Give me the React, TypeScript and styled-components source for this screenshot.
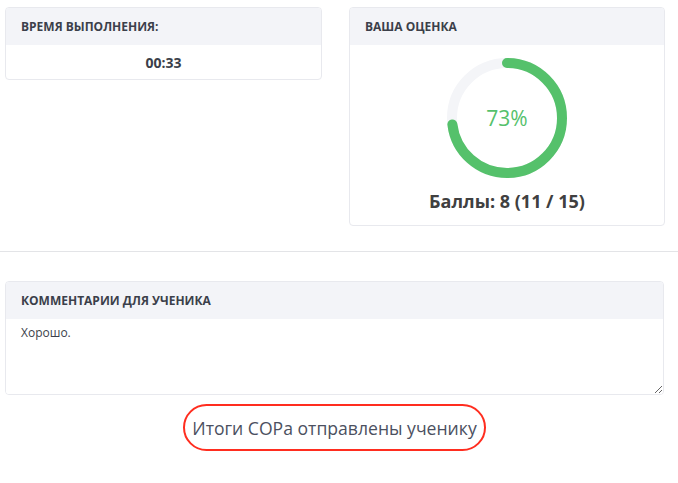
import styled, { createGlobalStyle } from "styled-components";

const GlobalStyle = createGlobalStyle`
  html, body {
    margin: 0;
    padding: 0;
    background: #fff;
  }
  body {
    font-family: "Open Sans", "Liberation Sans", sans-serif;
    color: #3b3f4a;
  }
  * { box-sizing: border-box; }
`;

const percent = 73;
const radius = 55;
const circumference = 2 * Math.PI * radius;

export default function App() {
  return <Page>
    <GlobalStyle />
    <TopRow>
      <Card>
        <CardHeader>Время выполнения:</CardHeader>
        <TimeBody>00:33</TimeBody>
      </Card>
      <Card>
        <CardHeader>Ваша оценка</CardHeader>
        <ScoreBody>
          <Gauge percent={percent} />
          <Points>Баллы: 8 (11 / 15)</Points>
        </ScoreBody>
      </Card>
    </TopRow>
    <Divider />
    <CommentSection>
      <Card>
        <CardHeader>Комментарии для ученика</CardHeader>
        <CommentArea readOnly defaultValue="Хорошо." />
      </Card>
      <StatusRow>
        <StatusOval>Итоги СОРа отправлены ученику</StatusOval>
      </StatusRow>
    </CommentSection>
  </Page>;
}

function Gauge(props: {percent: number}) {
  const filled = circumference * props.percent / 100;
  return <GaugeWrap>
    <svg width="120" height="120" viewBox="0 0 120 120">
      <circle cx="60" cy="60" r={radius} fill="none" stroke="#f4f5f8" strokeWidth="10" />
      <circle
        cx="60" cy="60" r={radius}
        fill="none"
        stroke="#55c16b"
        strokeWidth="10"
        strokeLinecap="round"
        strokeDasharray={`${filled} ${circumference}`}
        transform="rotate(-90 60 60)"
      />
    </svg>
    <GaugeLabel>{props.percent}%</GaugeLabel>
  </GaugeWrap>;
}

const Page = styled.div`
  width: 678px;
  padding-top: 7px;
`;

const TopRow = styled.div`
  display: grid;
  grid-template-columns: 317px 316px;
  column-gap: 27px;
  align-items: start;
  padding-left: 5px;
`;

const Card = styled.div`
  border: 1px solid #e8e9ee;
  border-radius: 4px;
  background: #fff;
  overflow: hidden;
`;

const CardHeader = styled.div`
  height: 37px;
  display: flex;
  align-items: center;
  padding: 0 15px;
  background: #f3f4f8;
  font-size: 12px;
  font-weight: 700;
  text-transform: uppercase;
  color: #3b3f4a;
`;

const TimeBody = styled.div`
  height: 34px;
  display: flex;
  align-items: center;
  justify-content: center;
  font-size: 14px;
  font-weight: 700;
  color: #3b3f4a;
`;

const ScoreBody = styled.div`
  display: flex;
  flex-direction: column;
  align-items: center;
  padding: 13px 0 11px;
`;

const GaugeWrap = styled.div`
  position: relative;
  width: 120px;
  height: 120px;
  svg { display: block; }
`;

const GaugeLabel = styled.div`
  position: absolute;
  inset: 0;
  display: flex;
  align-items: center;
  justify-content: center;
  font-size: 21px;
  font-weight: 400;
  color: #55c16b;
`;

const Points = styled.div`
  margin-top: 11px;
  font-size: 18px;
  font-weight: 700;
  color: #404040;
  line-height: 25px;
`;

const Divider = styled.hr`
  width: 678px;
  margin: 25px 0 0;
  border: none;
  border-top: 1px solid #e3e4e7;
`;

const CommentSection = styled.div`
  margin: 29px 14px 0 5px;
`;

const CommentArea = styled.textarea`
  display: block;
  width: 100%;
  height: 75px;
  border: none;
  outline: none;
  resize: vertical;
  padding: 5px 15px;
  font-family: "Open Sans", "Liberation Sans", sans-serif;
  font-size: 12px;
  line-height: 18px;
  color: #3b3f4a;
  background: #fff;
`;

const StatusRow = styled.div`
  display: flex;
  justify-content: center;
  margin-top: 9px;
`;

const StatusOval = styled.div`
  height: 47px;
  display: flex;
  align-items: center;
  padding: 0 7px;
  border: 2.5px solid #ff2d1f;
  border-radius: 24px;
  font-size: 17.6px;
  color: #4b5060;
`;
